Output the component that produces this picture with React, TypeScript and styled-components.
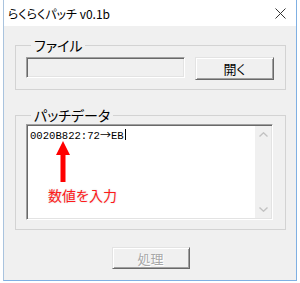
import styled, { createGlobalStyle, css } from 'styled-components';

const GlobalStyle = createGlobalStyle`
  html, body {
    margin: 0;
    padding: 0;
    background: #fff;
  }
  body {
    width: 300px;
    height: 283px;
    overflow: hidden;
    font-family: "Noto Sans CJK JP", "Noto Sans", sans-serif;
    font-feature-settings: "palt";
  }
`;

const sunken = css`
  box-sizing: border-box;
  border: 1px solid;
  border-color: #a0a0a0 #ffffff #ffffff #a0a0a0;
  padding: 1px;
  box-shadow: inset 1px 1px 0 #696969, inset -1px -1px 0 #e3e3e3;
`;

const Window = styled.div`
  box-sizing: border-box;
  width: 294px;
  height: 281px;
  margin-left: 3px;
  border-left: 1px solid #a9c3de;
  border-right: 1px solid #7fb0e3;
  border-bottom: 1px solid #7fb0e3;
  background: #f0f0f0;
  display: flex;
  flex-direction: column;
`;

const TitleBar = styled.div`
  height: 26px;
  flex: none;
  background: #fff;
  display: flex;
  align-items: center;
  justify-content: space-between;
  padding: 0 10px 0 4px;
  font-size: 12px;
  color: #000;
`;

const Body = styled.div`
  flex: 1;
  display: flex;
  flex-direction: column;
  padding: 11px 10px 0 11px;
`;

const Group = styled.fieldset<{ $pad: string; $gap?: number }>`
  margin: ${(p) => p.$gap ?? 0}px 0 0 0;
  min-width: 0;
  padding: ${(p) => p.$pad};
  border: 1px solid #d3d3d3;
`;

const Legend = styled.legend`
  margin-left: 5px;
  padding: 0 3px;
  font-size: 14px;
  line-height: 16px;
  color: #000;
`;

const Row = styled.div`
  display: flex;
  align-items: flex-start;
  gap: 10px;
`;

const TextField = styled.div`
  ${sunken};
  width: 159px;
  height: 21px;
  background: #f0f0f0;
`;

const Button = styled.div<{ $w: number; $h: number; $disabled?: boolean }>`
  box-sizing: border-box;
  width: ${(p) => p.$w}px;
  height: ${(p) => p.$h}px;
  border: 1px solid;
  border-color: #e3e3e3 #696969 #696969 #e3e3e3;
  box-shadow: inset 1px 1px 0 #fff, inset -1px -1px 0 #a0a0a0;
  background: #f0f0f0;
  display: flex;
  align-items: center;
  justify-content: center;
  font-size: 13px;
  color: ${(p) => (p.$disabled ? '#a8a8a8' : '#000')};
  text-shadow: ${(p) => (p.$disabled ? '1px 1px 0 #fff' : 'none')};
`;

const TextArea = styled.div`
  ${sunken};
  position: relative;
  width: 247px;
  height: 96px;
  background: #fff;
  display: flex;
`;

const Content = styled.div`
  flex: 1;
  padding: 2px 2px 0;
  display: flex;
  align-items: flex-start;
  font-family: "Liberation Mono", "DejaVu Sans Mono", monospace;
  font-size: 10.6px;
  line-height: 13px;
  color: #000;
`;

const WideChar = styled.span`
  font-family: "Noto Sans CJK JP", sans-serif;
  font-size: 11px;
`;

const Caret = styled.span`
  display: inline-block;
  width: 0;
  height: 11px;
  margin: 1px 0 0 1px;
  border-left: 1px solid #000;
`;

const Scrollbar = styled.div`
  width: 16px;
  background: #f0f0f0;
  display: flex;
  flex-direction: column;
  justify-content: space-between;
`;

const ScrollArrow = styled.div`
  height: 17px;
  display: flex;
  align-items: center;
  justify-content: center;
`;

const Annotation = styled.div`
  position: absolute;
  left: 21px;
  top: 16px;
  display: flex;
  flex-direction: column;
  align-items: flex-start;
`;

const AnnotationText = styled.div`
  margin-top: 3px;
  font-size: 14px;
  line-height: 18px;
  color: #ff1a1a;
  white-space: nowrap;
  text-shadow: 0 0 2px rgba(0, 0, 0, 0.18);
`;

const Footer = styled.div`
  display: flex;
  justify-content: center;
  margin-top: 17px;
`;

function Chevron({ up }: { up?: boolean }) {
  return (
    <svg width="9" height="5" viewBox="0 0 9 5">
      <path
        d={up ? 'M0.5 4.5 L4.5 0.8 L8.5 4.5' : 'M0.5 0.5 L4.5 4.2 L8.5 0.5'}
        fill="none"
        stroke="#c2c2c2"
        strokeWidth="1.4"
      />
    </svg>
  );
}

export default function App() {
  return (
    <>
      <GlobalStyle />
      <Window>
        <TitleBar>
          <span>らくらくパッチ v0.1b</span>
          <svg width="11" height="11" viewBox="0 0 11 11">
            <path d="M0.5 0.5 L10.5 10.5 M10.5 0.5 L0.5 10.5" stroke="#333" strokeWidth="1" />
          </svg>
        </TitleBar>
        <Body>
          <Group $pad="4px 11px 9px 10px">
            <Legend>ファイル</Legend>
            <Row>
              <TextField />
              <Button $w={79} $h={23}>開く</Button>
            </Row>
          </Group>
          <Group $pad="1px 12px 9px 10px" $gap={17}>
            <Legend>パッチデータ</Legend>
            <TextArea>
              <Content>
                <span>
                  0020B822:72<WideChar>→</WideChar>EB
                </span>
                <Caret />
              </Content>
              <Scrollbar>
                <ScrollArrow>
                  <Chevron up />
                </ScrollArrow>
                <ScrollArrow>
                  <Chevron />
                </ScrollArrow>
              </Scrollbar>
              <Annotation>
                <svg width="16" height="42" viewBox="0 0 16 42" style={{ marginLeft: 7 }}>
                  <path d="M8 0 L15 14 L10.5 14 L10.5 41 L5.5 41 L5.5 14 L1 14 Z" fill="#ff0000" />
                </svg>
                <AnnotationText>数値を入力</AnnotationText>
              </Annotation>
            </TextArea>
          </Group>
          <Footer>
            <Button $w={78} $h={22} $disabled>
              処理
            </Button>
          </Footer>
        </Body>
      </Window>
    </>
  );
}
